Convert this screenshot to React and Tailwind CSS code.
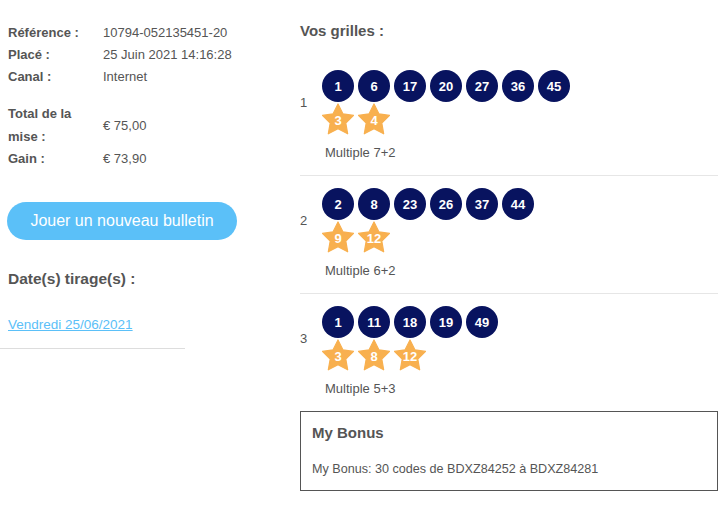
import React from "react";

const font = { fontFamily: '"Liberation Sans", Arial, sans-serif' };

function Ball({ n }) {
  return (
    <div className="w-[32px] h-[32px] rounded-full bg-[#08135f] text-white flex items-center justify-center text-[13px] font-bold leading-none">
      {n}
    </div>
  );
}

function Star({ n }) {
  return (
    <div className="relative w-[32px] h-[32px]">
      <svg width="32" height="32" viewBox="0 0 32 32" className="absolute inset-0">
        <polygon
          points="16,1 20.9,10.8 31.6,12.4 23.8,20 25.7,30.8 16,25.8 6.3,30.8 8.2,20 0.4,12.4 11.1,10.8"
          fill="#f8b04f"
          stroke="#f8b04f"
          strokeWidth="1.2"
          strokeLinejoin="round"
        />
      </svg>
      <span className="absolute inset-x-0 top-[11px] text-center text-white text-[13px] font-bold leading-[14px]">
        {n}
      </span>
    </div>
  );
}

function Grille({ idx, balls, stars, label, border }) {
  return (
    <div className={`pt-3 pb-3 ${border ? "border-b border-[#e6e6e6]" : ""}`}>
      <div className="flex items-center">
        <div className="w-[22px] text-[13px] text-[#555]">{idx}</div>
        <div className="flex flex-col gap-[1px]">
          <div className="flex gap-[4px]">
            {balls.map((b, i) => (
              <Ball key={i} n={b} />
            ))}
          </div>
          <div className="flex gap-[4px]">
            {stars.map((s, i) => (
              <Star key={i} n={s} />
            ))}
          </div>
        </div>
      </div>
      <div className="mt-2 ml-[25px] text-[13px] leading-[20px] text-[#555]">{label}</div>
    </div>
  );
}

function InfoRow({ label, value }) {
  return (
    <div className="flex leading-[22px] text-[13px]">
      <div className="w-[95px] shrink-0 font-bold text-[#555]">{label}</div>
      <div className="whitespace-nowrap text-[#555]">{value}</div>
    </div>
  );
}

export default function App() {
  return (
    <div style={font} className="w-[727px] h-[508px] bg-white grid grid-cols-[185px_418px] gap-x-[115px]">
      <div className="pt-[22px]">
        <div className="pl-2 pb-[13px] border-b border-[#dddddd]">
          <InfoRow label="Référence :" value="10794-052135451-20" />
          <InfoRow label="Placé :" value="25 Juin 2021 14:16:28" />
          <InfoRow label="Canal :" value="Internet" />
          <div className="mt-[14px] flex items-center text-[13px] leading-[23px]">
            <div className="w-[95px] shrink-0 font-bold text-[#555]">Total de la mise :</div>
            <div className="whitespace-nowrap text-[#555]">€ 75,00</div>
          </div>
          <InfoRow label="Gain :" value="€ 73,90" />
          <button className="mt-[32px] ml-[-1px] w-[230px] h-[38px] rounded-full bg-[#5bc0f8] text-white text-[16px] leading-none">
            Jouer un nouveau bulletin
          </button>
          <div className="mt-[27px] text-[15.5px] leading-[24px] font-bold text-[#555] whitespace-nowrap">Date(s) tirage(s) :</div>
          <div className="mt-[24px] text-[13.5px] leading-[20px] whitespace-nowrap">
            <a href="#" className="text-[#5bc0f8] underline">Vendredi 25/06/2021</a>
          </div>
        </div>
      </div>
      <div className="pt-[19px]">
        <div className="text-[15px] leading-[24px] font-bold text-[#555] mb-[15px]">Vos grilles :</div>
        <Grille idx="1" balls={[1, 6, 17, 20, 27, 36, 45]} stars={[3, 4]} label="Multiple 7+2" border />
        <Grille idx="2" balls={[2, 8, 23, 26, 37, 44]} stars={[9, 12]} label="Multiple 6+2" border />
        <Grille idx="3" balls={[1, 11, 18, 19, 49]} stars={[3, 8, 12]} label="Multiple 5+3" />
        <div className="border border-[#555] px-[11px] pt-[11px] pb-[11px]">
          <div className="text-[15px] leading-[20px] font-bold text-[#555]">My Bonus</div>
          <div className="mt-[16px] text-[12.6px] leading-[20px] text-[#555]">
            My Bonus: 30 codes de BDXZ84252 à BDXZ84281
          </div>
        </div>
      </div>
    </div>
  );
}
